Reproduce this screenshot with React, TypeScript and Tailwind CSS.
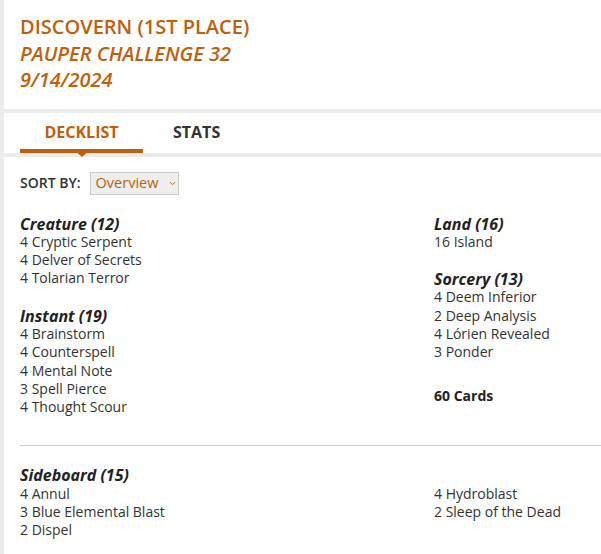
import { ChevronDown } from 'lucide-react';

type Group = { title: string; cards: string[] };

const LEFT: Group[] = [
  { title: 'Creature (12)', cards: ['4 Cryptic Serpent', '4 Delver of Secrets', '4 Tolarian Terror'] },
  { title: 'Instant (19)', cards: ['4 Brainstorm', '4 Counterspell', '4 Mental Note', '3 Spell Pierce', '4 Thought Scour'] },
];

const RIGHT: Group[] = [
  { title: 'Land (16)', cards: ['16 Island'] },
  { title: 'Sorcery (13)', cards: ['4 Deem Inferior', '2 Deep Analysis', '4 Lórien Revealed', '3 Ponder'] },
];

const SIDE_A = ['4 Annul', '3 Blue Elemental Blast', '2 Dispel'];
const SIDE_B = ['4 Hydroblast', '2 Sleep of the Dead'];

function CardGroup({ group, last }: { group: Group; last?: boolean }) {
  return (
    <div className={last ? '' : 'mb-[19px]'}>
      <h3 className="text-[16px] leading-[18.3px] font-bold italic text-[#222]">{group.title}</h3>
      {group.cards.map((c) => (
        <div key={c}>{c}</div>
      ))}
    </div>
  );
}

export default function App() {
  return (
    <div
      className="min-h-screen bg-[#ececec] pl-[4px] text-[14px] leading-[18.3px] text-[#333]"
      style={{ fontFamily: '"Open Sans", "Liberation Sans", sans-serif' }}
    >
      {/* ── Header ── */}
      <header className="bg-white pl-4 pt-[14px] pb-[15px] text-[20px] leading-[26.5px] font-semibold text-[#c0600d]">
        <div>DISCOVERN (1ST PLACE)</div>
        <div className="italic">PAUPER CHALLENGE 32</div>
        <div className="italic">9/14/2024</div>
      </header>

      {/* ── Tabs ── */}
      <nav className="mt-1 bg-white pl-4 h-10 flex items-end">
        <div className="relative w-[123px] h-full flex items-center justify-center pt-1 border-b-4 border-[#c0600d] text-[16px] font-bold text-[#c0600d]">
          DECKLIST
          <span className="absolute left-1/2 -translate-x-1/2 top-full mt-px w-0 h-0 border-l-[8px] border-r-[8px] border-t-[7px] border-l-transparent border-r-transparent border-t-[#c0600d] z-10" />
        </div>
        <div className="ml-[30px] h-full flex items-center text-[16px] font-bold text-[#333]">STATS</div>
      </nav>

      {/* ── Content ── */}
      <main className="mt-1 bg-white pl-4 pt-[15px] pb-10">
        <div className="flex items-center gap-[9px]">
          <span className="text-[14px] font-semibold text-[#333]">SORT BY:</span>
          <div className="w-[89px] h-[23px] flex items-center pl-[5px] border border-[#cacaca] bg-[#eeeeee] text-[14.5px] text-[#c0600d]">
            Overview
            <ChevronDown size={11} strokeWidth={2.5} className="ml-[10px]" />
          </div>
        </div>

        <div className="mt-5 grid grid-cols-[414px_1fr]">
          <div>
            {LEFT.map((g, i) => (
              <CardGroup key={g.title} group={g} last={i === LEFT.length - 1} />
            ))}
          </div>
          <div>
            {RIGHT.map((g, i) => (
              <CardGroup key={g.title} group={g} last={i === RIGHT.length - 1} />
            ))}
            <div className="mt-[25px] font-bold text-[#222]">60 Cards</div>
          </div>
        </div>

        <hr className="mt-[29px] border-t border-[#cccccc]" />

        <div className="mt-5">
          <h3 className="text-[16px] leading-[18.3px] font-bold italic text-[#222]">Sideboard (15)</h3>
          <div className="grid grid-cols-[414px_1fr]">
            <div>
              {SIDE_A.map((c) => (
                <div key={c}>{c}</div>
              ))}
            </div>
            <div>
              {SIDE_B.map((c) => (
                <div key={c}>{c}</div>
              ))}
            </div>
          </div>
        </div>
      </main>
    </div>
  );
}
